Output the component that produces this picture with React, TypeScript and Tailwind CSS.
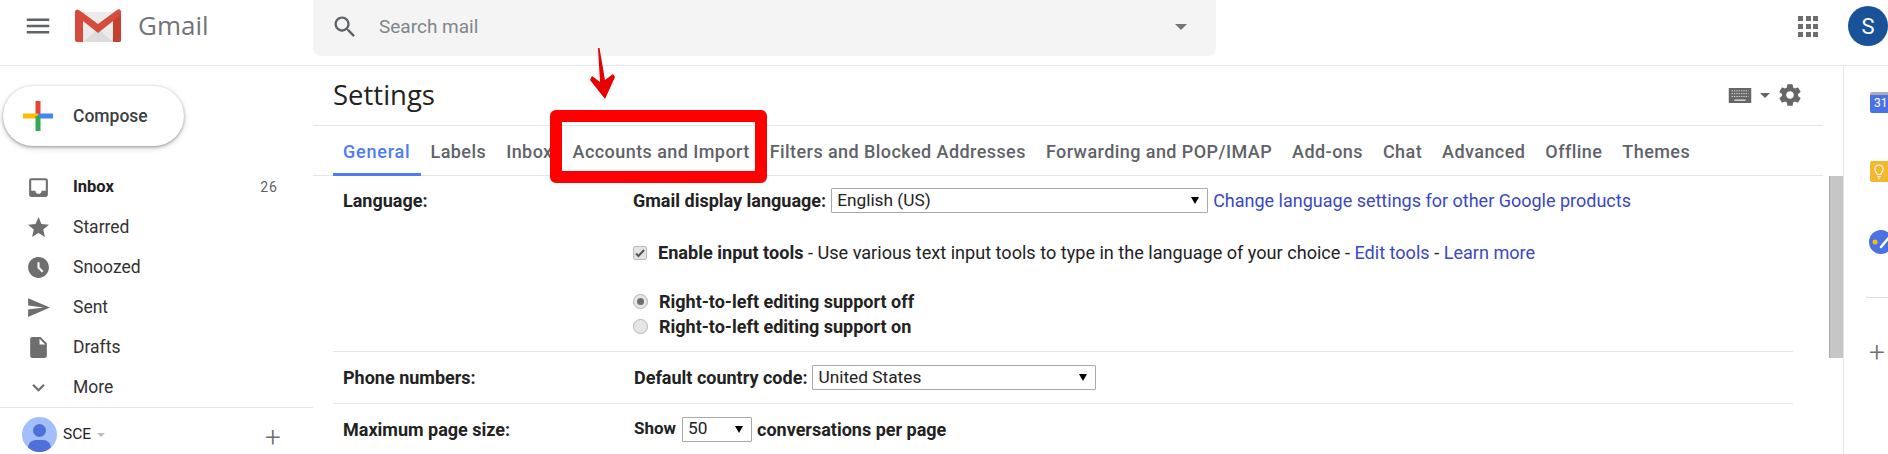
import React from "react";

const P = ({ d, className }: { d: string; className?: string }) => (
  <svg viewBox="0 0 24 24" className={className} fill="currentColor"><path d={d} /></svg>
);

const icons = {
  menu: "M3 18h18v-2H3v2zm0-5h18v-2H3v2zm0-7v2h18V6H3z",
  inbox: "M19 3H5c-1.1 0-2 .9-2 2v14c0 1.1.9 2 2 2h14c1.1 0 2-.9 2-2V5c0-1.1-.9-2-2-2zm0 12h-4c0 1.66-1.35 3-3 3s-3-1.34-3-3H5V5h14v10z",
  star: "M12 17.27L18.18 21l-1.64-7.03L22 9.24l-7.19-.61L12 2 9.19 8.63 2 9.24l5.46 4.73L5.82 21z",
  clock: "M11.99 2C6.47 2 2 6.48 2 12s4.47 10 9.99 10C17.52 22 22 17.52 22 12S17.52 2 11.99 2zm3.3 14.71L11 12.41V7h2v4.59l3.71 3.71-1.42 1.41z",
  send: "M2.01 21L23 12 2.01 3 2 10l15 2-15 2z",
  draft: "M14 2H6c-1.1 0-1.99.9-1.99 2L4 20c0 1.1.89 2 1.99 2H18c1.1 0 2-.9 2-2V8l-6-6zm-1 7V3.5L18.5 9H13z",
  chevron: "M7.41 8.59L12 13.17l4.59-4.58L18 10l-6 6-6-6z",
  search: "M15.5 14h-.79l-.28-.27C15.41 12.59 16 11.11 16 9.5 16 5.91 13.09 3 9.5 3S3 5.91 3 9.5 5.91 16 9.5 16c1.61 0 3.09-.59 4.23-1.57l.27.28v.79l5 4.99L20.49 19l-4.99-5zm-6 0C7.01 14 5 11.99 5 9.5S7.01 5 9.5 5 14 7.01 14 9.5 11.99 14 9.5 14z",
  gear: "M19.43 12.98c.04-.32.07-.64.07-.98s-.03-.66-.07-.98l2.11-1.65c.19-.15.24-.42.12-.64l-2-3.46c-.12-.22-.39-.3-.61-.22l-2.49 1c-.52-.4-1.08-.73-1.69-.98l-.38-2.65C14.46 2.18 14.25 2 14 2h-4c-.25 0-.46.18-.49.42l-.38 2.65c-.61.25-1.17.59-1.69.98l-2.49-1c-.23-.09-.49 0-.61.22l-2 3.46c-.13.22-.07.49.12.64l2.11 1.65c-.04.32-.07.65-.07.98s.03.66.07.98l-2.11 1.65c-.19.15-.24.42-.12.64l2 3.46c.12.22.39.3.61.22l2.49-1c.52.4 1.08.73 1.69.98l.38 2.65c.03.24.24.42.49.42h4c.25 0 .46-.18.49-.42l.38-2.65c.61-.25 1.17-.59 1.69-.98l2.49 1c.23.09.49 0 .61-.22l2-3.46c.12-.22.07-.49-.12-.64l-2.11-1.65zM12 15.5c-1.93 0-3.5-1.57-3.5-3.5s1.57-3.5 3.5-3.5 3.5 1.57 3.5 3.5-1.57 3.5-3.5 3.5z",
};

const nav = [
  { label: "Inbox", icon: icons.inbox, bold: true, count: "26" },
  { label: "Starred", icon: icons.star },
  { label: "Snoozed", icon: icons.clock },
  { label: "Sent", icon: icons.send },
  { label: "Drafts", icon: icons.draft },
  { label: "More", icon: icons.chevron },
];

const tabs = ["General", "Labels", "Inbox", "Accounts and Import", "Filters and Blocked Addresses", "Forwarding and POP/IMAP", "Add-ons", "Chat", "Advanced", "Offline", "Themes"];

const Caret = ({ className }: { className?: string }) => (
  <span className={`w-0 h-0 border-x-[6px] border-x-transparent border-t-[6px] inline-block ${className}`} />
);

const Select = ({ value, className }: { value: string; className: string }) => (
  <div className={`h-[25px] border border-[#a9a9a9] rounded-[1px] flex items-center justify-between pl-[5px] pr-[8px] text-[17.300px] text-[#222] font-normal ${className}`}>
    <span>{value}</span>
    <span className="w-0 h-0 border-x-[4px] border-x-transparent border-t-[7px] border-t-black" />
  </div>
);

const Radio = ({ on }: { on?: boolean }) => (
  <span className="w-[15px] h-[15px] rounded-full border border-[#b5b5b5] bg-[#e6e6e6] flex items-center justify-center shrink-0">
    {on && <span className="w-[7px] h-[7px] rounded-full bg-[#6f6f6f]" />}
  </span>
);

export default function App() {
  return (
    <div className="relative w-[1888px] h-[454px] overflow-hidden bg-white font-['Roboto',sans-serif] text-[#222]">
      <header className="h-[66px] border-b border-[#e6e6e6] flex">
        <div className="w-[313px] flex items-start shrink-0">
          <P d={icons.menu} className="w-[30px] h-[30px] text-[#5f6368] ml-[23px] mt-[11px]" />
          <svg viewBox="0 0 46 34" className="w-[46px] h-[34px] ml-[22px] mt-[9px]">
            <path d="M2 3h42v29a1 1 0 0 1-1 1H3a1 1 0 0 1-1-1z" fill="#ebebeb" />
            <path d="M8 33 23 20l15 13z" fill="#dcdcdc" />
            <path d="M0 3c0-2 2-3.500 4-2l19 14L42 1c2-1.500 4-.5 4 2v28a2 2 0 0 1-2 2h-6V12L23 24 8 12v21H2a2 2 0 0 1-2-2z" fill="#d54c3f" />
            <path d="M38 12l8-7v26a2 2 0 0 1-2 2h-6z" fill="#c5402f" />
          </svg>
          <span className="ml-[17px] mt-[7px] text-[26px] leading-[36px] text-[#717478] font-['Open_Sans',sans-serif]">Gmail</span>
        </div>
        <div className="w-[903px] h-[56px] bg-[#f4f4f4] rounded-b-[8px] flex items-center pl-[18px] pr-[29px] pb-[2px]">
          <P d={icons.search} className="w-[28px] h-[28px] text-[#5f6368]" />
          <span className="ml-[20px] text-[19px] text-[#80868b]">Search mail</span>
          <Caret className="ml-auto border-t-[#70757a]" />
        </div>
        <div className="flex-1 flex items-start">
          <div className="ml-[582px] mt-[16px] grid grid-cols-3 gap-[3px] w-[20px]">
            {Array.from({ length: 9 }).map((_, i) => (
              <span key={i} className="w-[5px] h-[5px] bg-[#6e6e6e]" />
            ))}
          </div>
          <div className="ml-[30px] mt-[6px] w-[40px] h-[40px] shrink-0 rounded-full bg-[#1a5299] text-white text-[22px] flex items-center justify-center">S</div>
        </div>
      </header>

      <div className="flex h-[388px]">
        <aside className="w-[313px] shrink-0 flex flex-col">
          <div className="ml-[3px] mt-[20px] w-[181px] h-[60px] rounded-full bg-white shadow-[0_1px_3px_rgba(60,64,67,0.45),0_2px_6px_rgba(60,64,67,0.2)] flex items-center">
            <svg viewBox="0 0 30 30" className="w-[30px] h-[30px] ml-[20px]">
              <rect x="12.500" y="0" width="5" height="15" fill="#ea4335" />
              <rect x="0" y="12.500" width="15" height="5" fill="#fbbc05" />
              <rect x="15" y="12.500" width="15" height="5" fill="#4285f4" />
              <rect x="12.500" y="15" width="5" height="15" fill="#34a853" />
            </svg>
            <span className="ml-[20px] text-[17.500px] text-[#3c4043] font-medium">Compose</span>
          </div>
          <nav className="mt-[21px] flex flex-col">
            {nav.map((n) => (
              <div key={n.label} className={`h-[40px] flex items-center pl-[26px] pr-[35px] ${n.bold ? "font-bold text-[#222] text-[16.500px]" : "text-[#333] text-[17.500px]"}`}>
                <P d={n.icon} className="w-[25px] h-[25px] text-[#6e6e6e] shrink-0" />
                <span className="ml-[22px]">{n.label}</span>
                {n.count && <span className="ml-auto text-[14px] font-normal text-[#5f6368] tracking-[1px]">{n.count}</span>}
              </div>
            ))}
          </nav>
          <div className="border-t border-[#e6e6e6] flex items-center pl-[22px] pt-[9px]">
            <div className="relative w-[35px] h-[35px] rounded-full bg-[#a3bffa] overflow-hidden shrink-0">
              <span className="absolute left-[11px] top-[7px] w-[13px] h-[13px] rounded-full bg-[#4f6fdc]" />
              <span className="absolute left-[6px] top-[23px] w-[23px] h-[16px] rounded-full bg-[#4f6fdc]" />
            </div>
            <span className="ml-[6px] text-[15.500px] text-[#222]">SCE</span>
            <Caret className="ml-[6px] border-t-[#bdbdbd] !border-x-[4px] !border-t-[4px]" />
            <span className="ml-[160px] mt-[6px] text-[28px] font-light text-[#6e6e6e] leading-none">+</span>
          </div>
        </aside>

        <main className="flex-1 flex min-w-0">
          <div className="flex-1 min-w-0">
            <div className="h-[60px] border-b border-[#e6e6e6] flex items-center pl-[20px] pr-[20px]">
              <span className="text-[27.500px] text-[#222] font-['Open_Sans',sans-serif] -mt-[2px]">Settings</span>
              <svg viewBox="0 0 24 16" className="w-[24px] h-[15px] ml-auto text-[#666]" fill="currentColor">
                <path d="M0 0h24v16H0z" />
                <path d="M3 3h18M3 6h18M3 9h18" stroke="#ddd" strokeWidth="1" strokeDasharray="1.500 1" />
                <path d="M6 13h12" stroke="#ddd" strokeWidth="1.500" />
              </svg>
              <Caret className="ml-[8px] border-t-[#666] !border-x-[5px] !border-t-[5px]" />
              <P d={icons.gear} className="w-[26px] h-[26px] ml-[7px] mb-[1px] text-[#666]" />
            </div>
            <div className="h-[50px] border-b border-[#e6e6e6] flex pl-[20px] text-[18px] tracking-[0.43px] font-medium text-[#5f6368]">
              {tabs.map((t, i) => (
                <div key={t} className={`h-[50px] px-[10px] flex items-center shrink-0 whitespace-nowrap ${i === 0 ? "text-[#4d7cf4] border-b-[3px] border-[#4d7cf4] pt-[3px] tracking-[0.8px]" : ""}`}>{t}</div>
              ))}
            </div>
            <div className="pl-[20px] pr-[30px] text-[18px]">
              <div className="h-[176px] border-b border-[#e6e6e6] pl-[10px] flex">
                <div className="w-[290px] font-bold pt-[14px] leading-[21px]">Language:</div>
                <div className="flex-1 flex flex-col">
                  <div className="flex items-center mt-[12px] h-[25px]">
                    <span className="font-bold">Gmail display language:</span>
                    <Select value="English (US)" className="ml-[5px] w-[377px]" />
                    <span className="ml-[5px] text-[#3a48c6]">Change language settings for other Google products</span>
                  </div>
                  <div className="flex items-center mt-[27px] h-[25px]">
                    <span className="w-[14px] h-[14px] bg-[#e3e3e3] border border-[#bcbcbc] rounded-[2px] flex items-center justify-center">
                      <svg viewBox="0 0 12 12" className="w-[12px] h-[12px]"><path d="M2 6.500l2.500 2.500L10 3" fill="none" stroke="#555" strokeWidth="2" /></svg>
                    </span>
                    <span className="ml-[11px] text-[18.100px]"><b className="font-bold">Enable input tools</b> - Use various text input tools to type in the language of your choice - <span className="text-[#3a48c6]">Edit tools</span> - <span className="text-[#3a48c6]">Learn more</span></span>
                  </div>
                  <div className="flex items-center gap-[11px] mt-[24px] h-[25px] font-bold"><Radio on /><span>Right-to-left editing support off</span></div>
                  <div className="flex items-center gap-[11px] h-[25px] font-bold"><Radio /><span>Right-to-left editing support on</span></div>
                </div>
              </div>
              <div className="h-[52px] border-b border-[#e6e6e6] pl-[10px] flex items-center">
                <div className="w-[291px] font-bold">Phone numbers:</div>
                <span className="font-bold">Default country code:</span>
                <Select value="United States" className="ml-[5px] w-[284px]" />
              </div>
              <div className="h-[50px] pl-[10px] flex items-center">
                <div className="w-[291px] font-bold">Maximum page size:</div>
                <span className="font-bold text-[17px] w-[48px]">Show</span>
                <Select value="50" className="w-[70px]" />
                <span className="font-bold ml-[5px]">conversations per page</span>
              </div>
            </div>
          </div>
          <div className="w-[14px] shrink-0 ml-[6px] pt-[110px]">
            <div className="h-[182px] bg-[#c6c6c6] border-l border-[#aaa]" />
          </div>
        </main>

        <aside className="w-[45px] shrink-0 border-l border-[#e6e6e6] overflow-hidden pt-[26px] pl-[25px] flex flex-col items-start">
          <div className="ml-[1px] w-[24px] h-[21px] shrink-0 bg-[#4a72e4] rounded-[2px] border-t-[3px] border-[#a6adb8] text-white text-[12px] leading-[17px] pl-[4px]">31</div>
          <div className="ml-[1px] mt-[48px] w-[24px] h-[21px] shrink-0 bg-[#f4b82e] rounded-[2px] flex items-center justify-center pr-[6px]">
            <svg viewBox="0 0 12 18" className="w-[10px] h-[16px]" fill="none" stroke="#fff" strokeWidth="1.300"><path d="M4 12c0-2-3-3-3-6.500a5 5 0 0 1 10 0C11 9 8 10 8 12zM4 14.500h4M5 17h2" /></svg>
          </div>
          <svg viewBox="0 0 24 24" className="mt-[48px] w-[24px] h-[24px] shrink-0">
            <circle cx="12" cy="12" r="12" fill="#4a72e4" />
            <circle cx="6" cy="12" r="2.500" fill="#fbbc05" />
            <path d="M12 17L22 5" stroke="#fff" strokeWidth="2.500" strokeLinecap="round" />
          </svg>
          <div className="mt-[43px] w-[40px] -ml-[3px] shrink-0 border-t border-[#dcdcdc]" />
          <span className="mt-[41px] text-[28px] font-light text-[#6e6e6e] leading-none">+</span>
        </aside>
      </div>

      <div className="absolute left-[550px] top-[110px] w-[217px] h-[73px] border-[12px] border-[#f00] rounded-[6px]" />
      <svg viewBox="0 0 30 56" className="absolute left-[588px] top-[47px] w-[30px] h-[56px]">
        <path d="M10 1 L11.500 1 L17 33 L25 27 L27 30 L17 52 L2 33 L4 29 L12 35 Z" fill="#e60000" />
      </svg>
    </div>
  );
}
